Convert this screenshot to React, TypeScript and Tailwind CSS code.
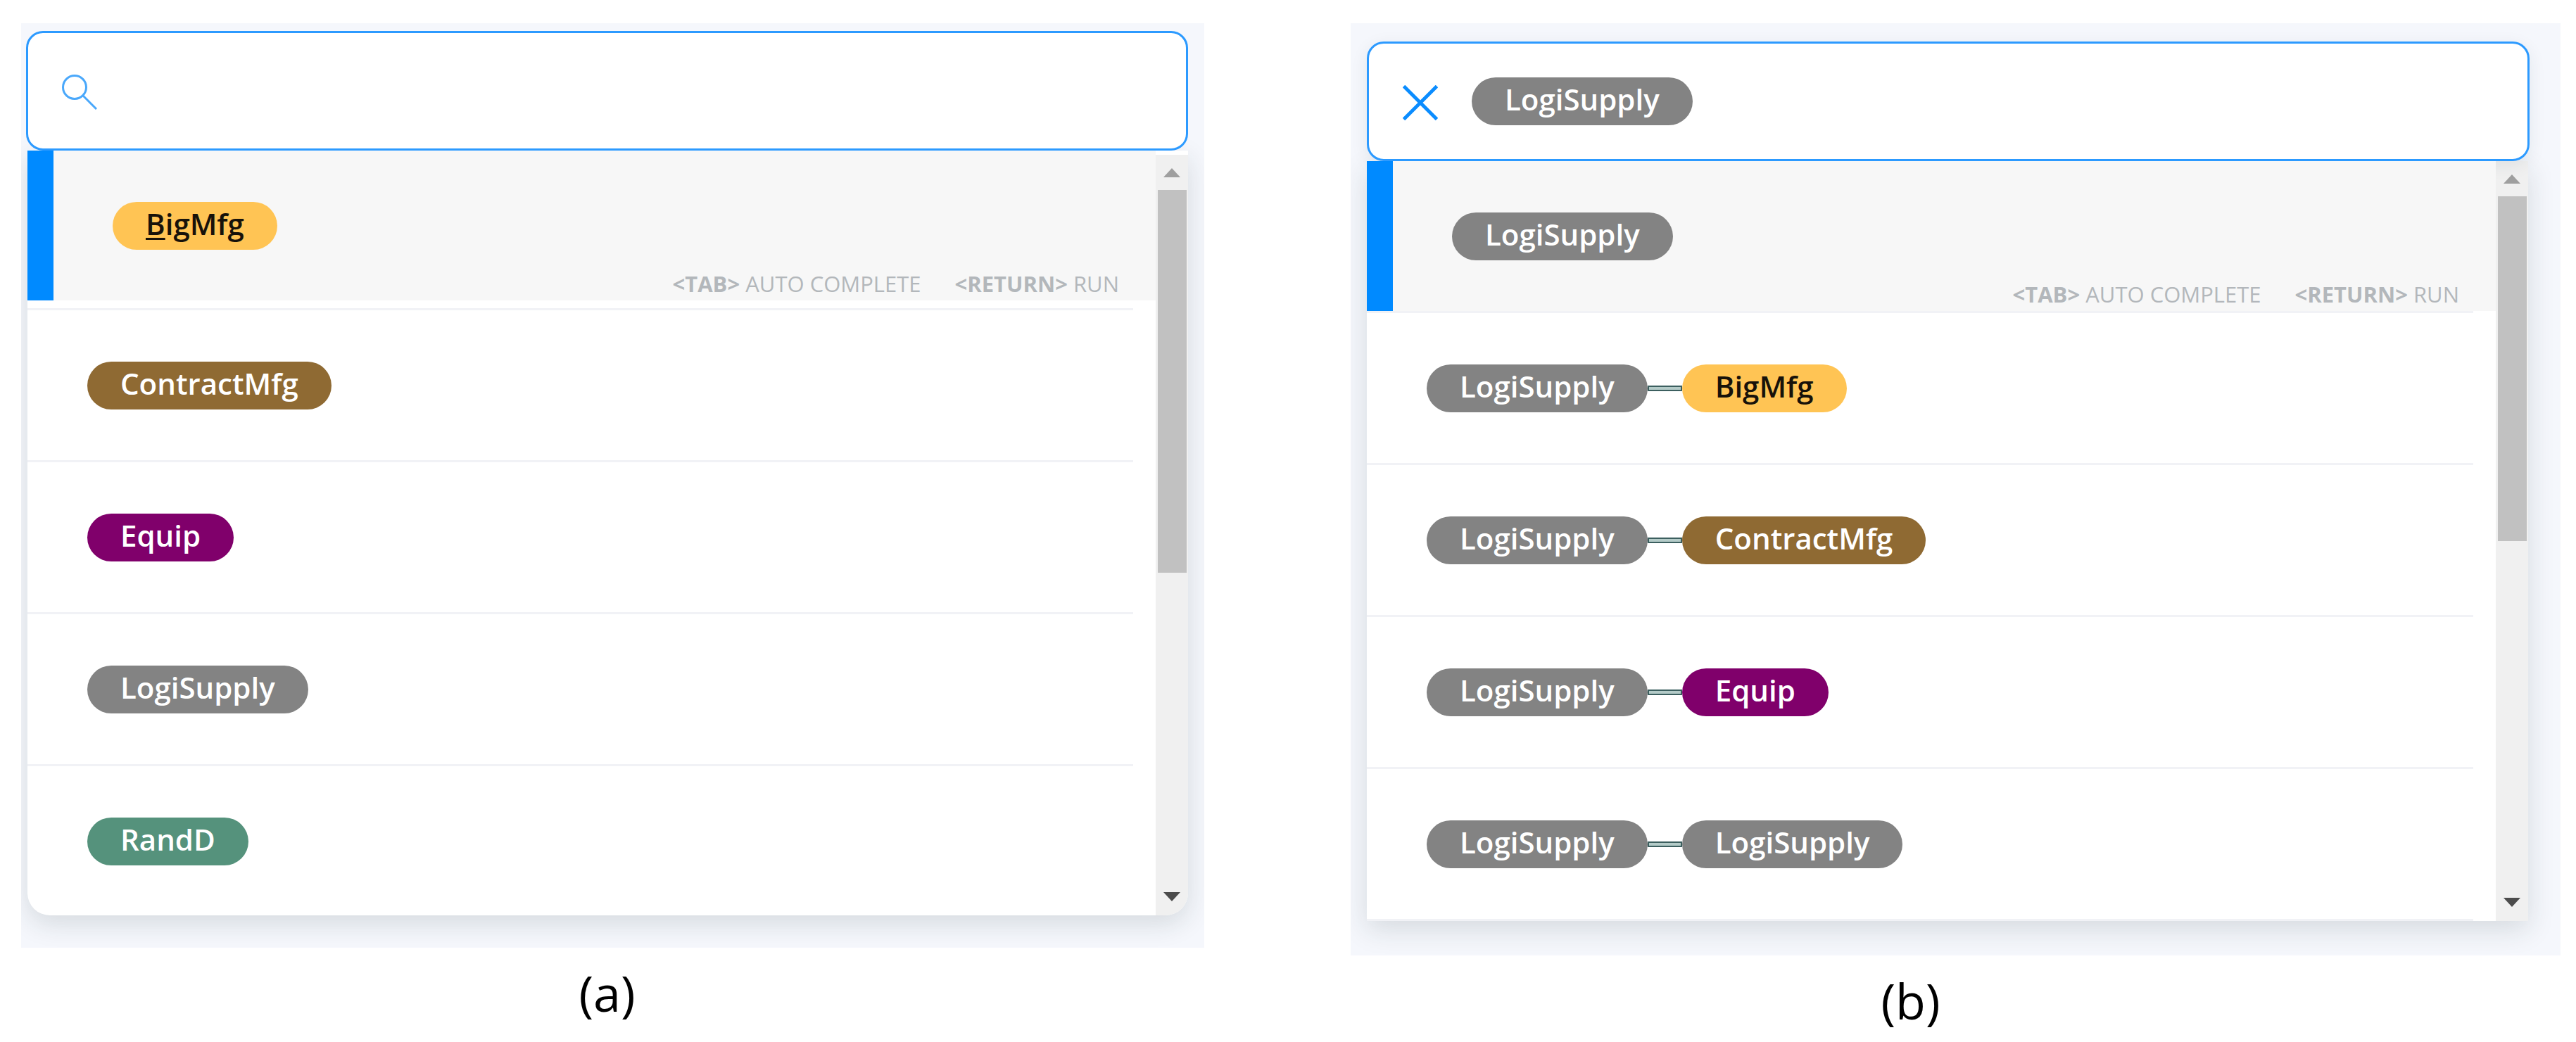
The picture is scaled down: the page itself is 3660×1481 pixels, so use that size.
import { useState } from 'react';
import { clsx } from 'clsx';

type Category = 'BigMfg' | 'ContractMfg' | 'Equip' | 'LogiSupply' | 'RandD';

const PILL_COLORS: Record<Category, string> = {
  BigMfg: 'bg-[#ffc454] text-[#17120a]',
  ContractMfg: 'bg-[#8f6a33] text-white',
  Equip: 'bg-[#80006b] text-white',
  LogiSupply: 'bg-[#838383] text-white',
  RandD: 'bg-[#55927c] text-white',
};

function Pill({ name, underlined = false }: { name: Category; underlined?: boolean }) {
  return (
    <span
      className={clsx(
        'flex h-[68px] shrink-0 items-center rounded-full px-[47px] pb-1.5 text-[42px] leading-none font-semibold',
        PILL_COLORS[name],
      )}
    >
      {underlined ? (
        <span>
          <span className="underline decoration-3 underline-offset-4">{name[0]}</span>
          {name.slice(1)}
        </span>
      ) : (
        name
      )}
    </span>
  );
}

function Connector() {
  return <span className="h-2 w-[49px] shrink-0 border-2 border-[#3c5f5f] bg-[#b4cbc8]" />;
}

function SearchIcon() {
  return (
    <svg viewBox="0 0 50 50" className="size-[50px]" fill="none" stroke="#4aa8fb" strokeWidth="3">
      <circle cx="18" cy="18" r="16.5" />
      <path d="M30 30 L49 49" />
    </svg>
  );
}

function CloseIcon() {
  return (
    <svg viewBox="0 0 50 50" className="size-[50px]" fill="none" stroke="#0a8cff" strokeWidth="5">
      <path d="M1.5 1.5 L48.5 48.5 M48.5 1.5 L1.5 48.5" />
    </svg>
  );
}

interface SearchBarProps {
  id: string;
  selected?: Category;
}

function SearchBar({ id, selected }: SearchBarProps) {
  const [query, setQuery] = useState('');

  return (
    <div
      className={clsx(
        'relative flex h-[170px] items-center rounded-3xl border-3 border-[#2c9aff] bg-white pr-8 pl-12',
        selected && 'shadow-[0_6px_24px_rgba(30,50,70,0.08)]',
      )}
    >
      {selected ? (
        <button type="button" aria-label="Clear search" className="mt-1">
          <CloseIcon />
        </button>
      ) : (
        <label htmlFor={id} aria-label="Search" className="mt-1">
          <SearchIcon />
        </label>
      )}
      {selected && (
        <div className="ml-12">
          <Pill name={selected} />
        </div>
      )}
      <input
        id={id}
        type="text"
        aria-label="Search pattern"
        value={query}
        onChange={(e) => setQuery(e.target.value)}
        className="ml-6 h-20 min-w-0 flex-1 bg-transparent text-[42px] outline-none"
      />
    </div>
  );
}

function KeyHints() {
  return (
    <div className="absolute right-[52px] bottom-1.5 flex gap-12 text-[31px] leading-9 text-[#b3b7bb]">
      <span>
        <b className="font-bold">&lt;TAB&gt;</b> AUTO COMPLETE
      </span>
      <span>
        <b className="font-bold">&lt;RETURN&gt;</b> RUN
      </span>
    </div>
  );
}

function Scrollbar({ className, thumbClass }: { className?: string; thumbClass: string }) {
  return (
    <div className={clsx('flex w-[46px] shrink-0 flex-col items-center bg-[#f0f0f0]', className)}>
      <button type="button" aria-label="Scroll up" className="flex h-[50px] shrink-0 items-center justify-center">
        <svg viewBox="0 0 24 13" className="h-[13px] w-6" fill="#9f9f9f">
          <path d="M12 0 L24 13 H0 Z" />
        </svg>
      </button>
      <div className={clsx('w-[41px] bg-[#c1c1c1]', thumbClass)} />
      <button type="button" aria-label="Scroll down" className="mt-auto flex h-[54px] shrink-0 items-center justify-center">
        <svg viewBox="0 0 24 13" className="h-[13px] w-6" fill="#4c4c4c">
          <path d="M0 0 H24 L12 13 Z" />
        </svg>
      </button>
    </div>
  );
}

interface SuggestionsProps {
  rows: Category[][];
  className: string;
  activeClass?: string;
  underlined?: boolean;
  scrollbarClass?: string;
  thumbClass: string;
}

function Suggestions({ rows, className, activeClass, underlined, scrollbarClass, thumbClass }: SuggestionsProps) {
  return (
    <div
      className={clsx(
        'flex overflow-hidden bg-white shadow-[0_12px_36px_rgba(30,50,50,0.14)]',
        className,
      )}
    >
      <ul role="listbox" aria-label="Suggestions" className="min-w-0 flex-1">
        {rows.map((row, i) => (
          <li key={row.join('-')} role="option" aria-selected={i === 0}>
            <div
              className={clsx(
                'relative flex h-[213px] items-center',
                i === 0 ? 'border-l-[37px] border-[#008aff] bg-[#f7f7f7] pl-[84px]' : 'pl-[85px]',
                i === 0 && activeClass,
              )}
            >
              {row.map((name, j) => (
                <div key={j} className="flex items-center">
                  {j > 0 && <Connector />}
                  <Pill name={name} underlined={underlined && i === 0} />
                </div>
              ))}
              {i === 0 && <KeyHints />}
            </div>
            <div className="mr-8 h-[3px] bg-[#f1f2f6]" />
          </li>
        ))}
      </ul>
      <Scrollbar className={scrollbarClass} thumbClass={thumbClass} />
    </div>
  );
}

export default function App() {
  return (
    <main className="grid h-screen grid-cols-[1681fr_1719fr] items-start gap-x-[208px] overflow-hidden bg-white pt-[33px] pr-[22px] pl-[30px] font-['Open_Sans',sans-serif]">
      <figure>
        <div className="overflow-hidden bg-[#f5f7fc] pt-[11px] pr-[23px] pb-[46px] pl-[7px]">
          <SearchBar id="search-a" />
          <Suggestions
            rows={[['BigMfg'], ['ContractMfg'], ['Equip'], ['LogiSupply'], ['RandD']]}
            className="ml-0.5 h-[1087px] rounded-b-[32px]"
            activeClass="mb-[11px]"
            scrollbarClass="mt-1.5"
            thumbClass="h-[544px]"
            underlined
          />
        </div>
        <figcaption className="pt-4 pr-4 text-center text-[70px] leading-[96px] text-black">
          (a)
        </figcaption>
      </figure>
      <figure>
        <div className="overflow-hidden bg-[#f5f7fc] pt-[26px] pr-11 pb-[49px] pl-[23px]">
          <SearchBar id="search-b" selected="LogiSupply" />
          <Suggestions
            rows={[
              ['LogiSupply'],
              ['LogiSupply', 'BigMfg'],
              ['LogiSupply', 'ContractMfg'],
              ['LogiSupply', 'Equip'],
              ['LogiSupply', 'LogiSupply'],
            ]}
            className="mr-0.5 h-[1080px]"
            thumbClass="h-[490px]"
          />
        </div>
        <figcaption className="pt-4 pr-32 text-center text-[70px] leading-[96px] text-black">
          (b)
        </figcaption>
      </figure>
    </main>
  );
}
